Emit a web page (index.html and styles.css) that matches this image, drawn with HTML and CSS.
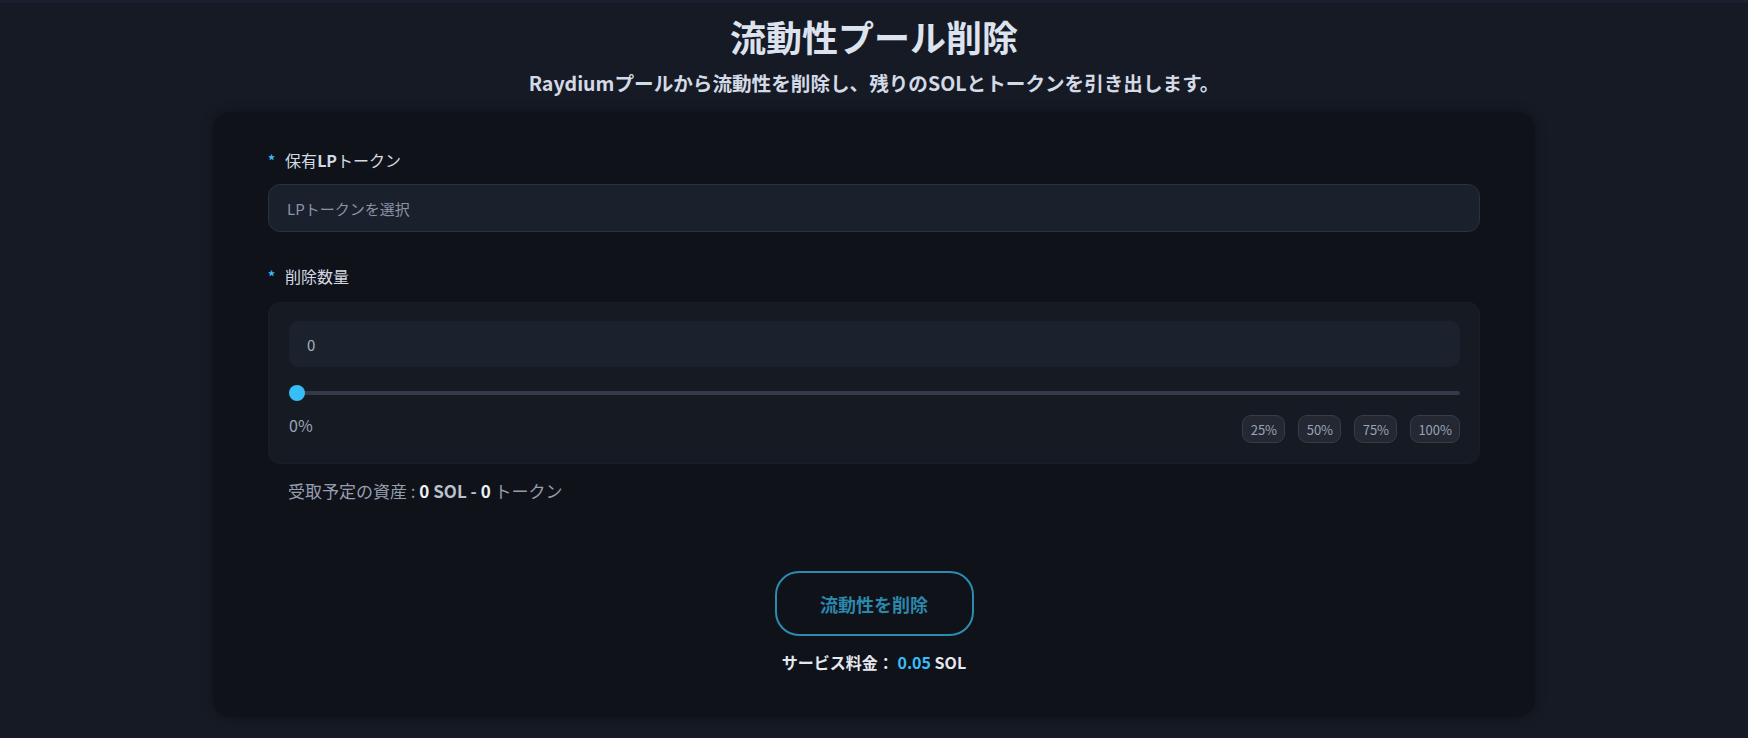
FILE: index.html
```html
<!DOCTYPE html>
<html lang="ja">
<head>
<meta charset="utf-8">
<title>流動性プール削除</title>
<link rel="stylesheet" href="styles.css">
</head>
<body>
<div class="topline"></div>
<header class="head">
  <h1 class="title">流動性プール削除</h1>
  <p class="subtitle">Raydiumプールから流動性を削除し、残りのSOLとトークンを引き出します。</p>
</header>
<main class="card">
  <div class="field">
    <label class="label"><span class="req">*</span>保有<b>LP</b>トークン</label>
    <div class="select">LPトークンを選択</div>
  </div>
  <div class="field field2">
    <label class="label"><span class="req">*</span>削除数量</label>
    <div class="panel">
      <div class="amount">0</div>
      <div class="slider"><span class="thumb"></span><span class="track"></span></div>
      <div class="slider-row">
        <span class="pct">0%</span>
        <div class="quick">
          <span class="qbtn">25%</span>
          <span class="qbtn">50%</span>
          <span class="qbtn">75%</span>
          <span class="qbtn">100%</span>
        </div>
      </div>
    </div>
    <p class="assets">受取予定の資産 : <b class="num">0</b> <b class="unit">SOL</b> <b class="unit">-</b> <b class="num">0</b> トークン</p>
  </div>
  <div class="actions">
    <button class="submit">流動性を削除</button>
    <p class="fee">サービス料金： <span class="fee-val">0.05</span> SOL</p>
  </div>
</main>
</body>
</html>
```
FILE: styles.css
```css
* { box-sizing: border-box; }
html, body { margin: 0; padding: 0; }
body {
  background: #161a24;
  font-family: "Noto Sans CJK JP", "Noto Sans", sans-serif;
  color: #d6dce6;
  min-height: 738px;
  overflow: hidden;
}
.topline {
  height: 3px;
  background: #1b2030;
}
.head {
  text-align: center;
  padding-top: 13px;
}
.title {
  margin: 0;
  font-size: 36px;
  line-height: 40px;
  font-weight: 700;
  color: #dce3ef;
}
.subtitle {
  margin: 13px 0 0;
  font-size: 19.6px;
  line-height: 28px;
  font-weight: 700;
  color: #d3dae6;
}
.card {
  width: 1322px;
  margin: 15px auto 0;
  background: #10121a;
  border-radius: 18px;
  padding: 36px 55px 43px;
  box-shadow: 0 0 12px rgba(0, 0, 0, 0.35);
}
.label {
  display: flex;
  align-items: center;
  font-size: 16px;
  line-height: 24px;
  color: #d3d9e3;
}
.label b { font-weight: 700; }
.req {
  color: #38bdf8;
  font-weight: 700;
  margin-right: 10px;
  font-size: 14px;
}
.select {
  margin-top: 12px;
  height: 48px;
  border: 1px solid #2a303c;
  border-radius: 12px;
  background: #1b212c;
  padding: 0 18px;
  display: flex;
  align-items: center;
  font-size: 15px;
  color: #8b94a7;
}
.field2 { margin-top: 32px; }
.panel {
  margin-top: 14px;
  background: #151a23;
  border: 1px solid #191e28;
  border-radius: 12px;
  padding: 18px 19px 20px 20px;
}
.amount {
  height: 46px;
  border-radius: 10px;
  background: #1c222d;
  padding: 0 18px;
  display: flex;
  align-items: center;
  font-size: 15px;
  color: #a7afbe;
}
.slider {
  margin-top: 18px;
  height: 16px;
  position: relative;
  display: flex;
  align-items: center;
}
.track {
  flex: 1;
  height: 4px;
  background: #353a48;
  border-radius: 2px;
}
.thumb {
  position: absolute;
  left: 0;
  top: 0;
  width: 16px;
  height: 16px;
  border-radius: 50%;
  background: #38bdf8;
}
.slider-row {
  margin-top: 14px;
  display: flex;
  justify-content: space-between;
  align-items: flex-start;
}
.pct {
  font-size: 16px;
  line-height: 20px;
  color: #9aa3b4;
}
.quick {
  display: flex;
  gap: 13px;
}
.qbtn {
  height: 28px;
  min-width: 43px;
  padding: 0 7px;
  display: flex;
  align-items: center;
  justify-content: center;
  background: #232833;
  border: 1px solid #363c48;
  border-radius: 9px;
  font-size: 13px;
  color: #9aa3b6;
}
.assets {
  margin: 15px 0 0;
  padding-left: 20px;
  font-size: 17px;
  line-height: 24px;
  color: #959eaf;
}
.assets .num { color: #eef1f6; font-weight: 700; }
.assets .unit { color: #b9c1ce; font-weight: 700; }
.actions {
  margin-top: 68px;
  display: flex;
  flex-direction: column;
  align-items: center;
}
.submit {
  width: 199px;
  height: 65px;
  background: transparent;
  border: 2px solid #2a8db0;
  border-radius: 24px;
  font-family: inherit;
  font-size: 18px;
  font-weight: 700;
  color: #2b88ab;
}
.fee {
  margin: 14px 0 0;
  font-size: 16px;
  line-height: 24px;
  font-weight: 700;
  color: #e4e8ef;
}
.fee-val { color: #38bdf8; }
```
